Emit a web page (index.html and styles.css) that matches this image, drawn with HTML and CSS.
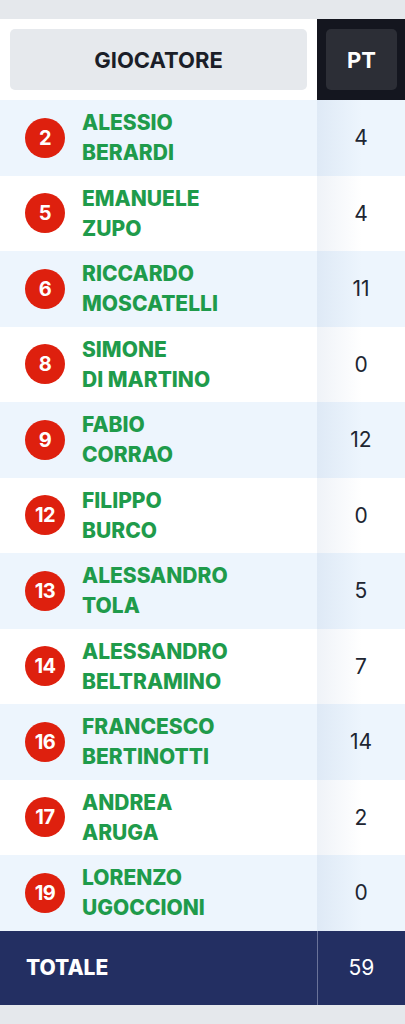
FILE: index.html
```html
<!DOCTYPE html>
<html lang="it">
<head>
<meta charset="utf-8">
<link rel="stylesheet" href="styles.css">
</head>
<body>
<div class="table">
  <div class="head">
    <div class="hcell-left"><div class="hbtn">GIOCATORE</div></div>
    <div class="hcell-right"><div class="hbtn dark">PT</div></div>
  </div>
  <div class="row alt"><div class="player"><span class="badge">2</span><span class="name">ALESSIO<br>BERARDI</span></div><div class="pts">4</div></div>
  <div class="row"><div class="player"><span class="badge">5</span><span class="name">EMANUELE<br>ZUPO</span></div><div class="pts">4</div></div>
  <div class="row alt"><div class="player"><span class="badge">6</span><span class="name">RICCARDO<br>MOSCATELLI</span></div><div class="pts">11</div></div>
  <div class="row"><div class="player"><span class="badge">8</span><span class="name">SIMONE<br>DI MARTINO</span></div><div class="pts">0</div></div>
  <div class="row alt"><div class="player"><span class="badge">9</span><span class="name">FABIO<br>CORRAO</span></div><div class="pts">12</div></div>
  <div class="row"><div class="player"><span class="badge">12</span><span class="name">FILIPPO<br>BURCO</span></div><div class="pts">0</div></div>
  <div class="row alt"><div class="player"><span class="badge">13</span><span class="name">ALESSANDRO<br>TOLA</span></div><div class="pts">5</div></div>
  <div class="row"><div class="player"><span class="badge">14</span><span class="name">ALESSANDRO<br>BELTRAMINO</span></div><div class="pts">7</div></div>
  <div class="row alt"><div class="player"><span class="badge">16</span><span class="name">FRANCESCO<br>BERTINOTTI</span></div><div class="pts">14</div></div>
  <div class="row"><div class="player"><span class="badge">17</span><span class="name">ANDREA<br>ARUGA</span></div><div class="pts">2</div></div>
  <div class="row alt"><div class="player"><span class="badge">19</span><span class="name">LORENZO<br>UGOCCIONI</span></div><div class="pts">0</div></div>
  <div class="total">
    <div class="tlabel">TOTALE</div>
    <div class="tpts">59</div>
  </div>
</div>
</body>
</html>
```
FILE: styles.css
```css
* { box-sizing: border-box; }
html, body { margin: 0; padding: 0; }
body {
  background: #e5e8ec;
  font-family: Inter, "Noto Sans", sans-serif;
  width: 405px;
  height: 1024px;
  overflow: hidden;
}
.table {
  margin-top: 19px;
}
.head {
  display: grid;
  grid-template-columns: 317px 88px;
  height: 81px;
}
.hcell-left {
  background: #ffffff;
  padding: 10px 10px 10px 10px;
}
.hcell-right {
  background: #14161f;
  padding: 10px 8px 10px 9px;
}
.hbtn {
  height: 61px;
  border-radius: 5px;
  background: #e6e9ed;
  display: flex;
  align-items: center;
  justify-content: center;
  font-weight: 700;
  font-size: 22px;
  color: #1b1e28;
}
.hbtn.dark {
  background: #2c2e36;
  color: #ffffff;
}
.row {
  display: grid;
  grid-template-columns: 317px 88px;
  height: 75.5px;
  background: #ffffff;
}
.row.alt { background: #edf5fd; }
.player {
  display: flex;
  align-items: center;
  padding-left: 25px;
  gap: 17px;
}
.badge {
  width: 40px;
  height: 40px;
  border-radius: 50%;
  background: #de200e;
  color: #ffffff;
  font-weight: 700;
  font-size: 20px;
  display: flex;
  align-items: center;
  justify-content: center;
  flex: none;
  letter-spacing: -0.5px;
}
.name {
  color: #1f9b4b;
  font-weight: 800;
  font-size: 21px;
  line-height: 30px;
  margin-top: 1px;
}
.pts {
  display: flex;
  align-items: center;
  justify-content: center;
  font-size: 21px;
  color: #202531;
  background: linear-gradient(to right, rgba(30, 80, 150, 0.07), rgba(30, 80, 150, 0) 45px);
}
.total {
  display: grid;
  grid-template-columns: 317px 88px;
  height: 74px;
  background: #232f62;
  color: #ffffff;
}
.tlabel {
  display: flex;
  align-items: center;
  padding-left: 26px;
  font-weight: 800;
  font-size: 21px;
}
.tpts {
  display: flex;
  align-items: center;
  justify-content: center;
  font-size: 21px;
  border-left: 1px solid #6a7399;
}
```
